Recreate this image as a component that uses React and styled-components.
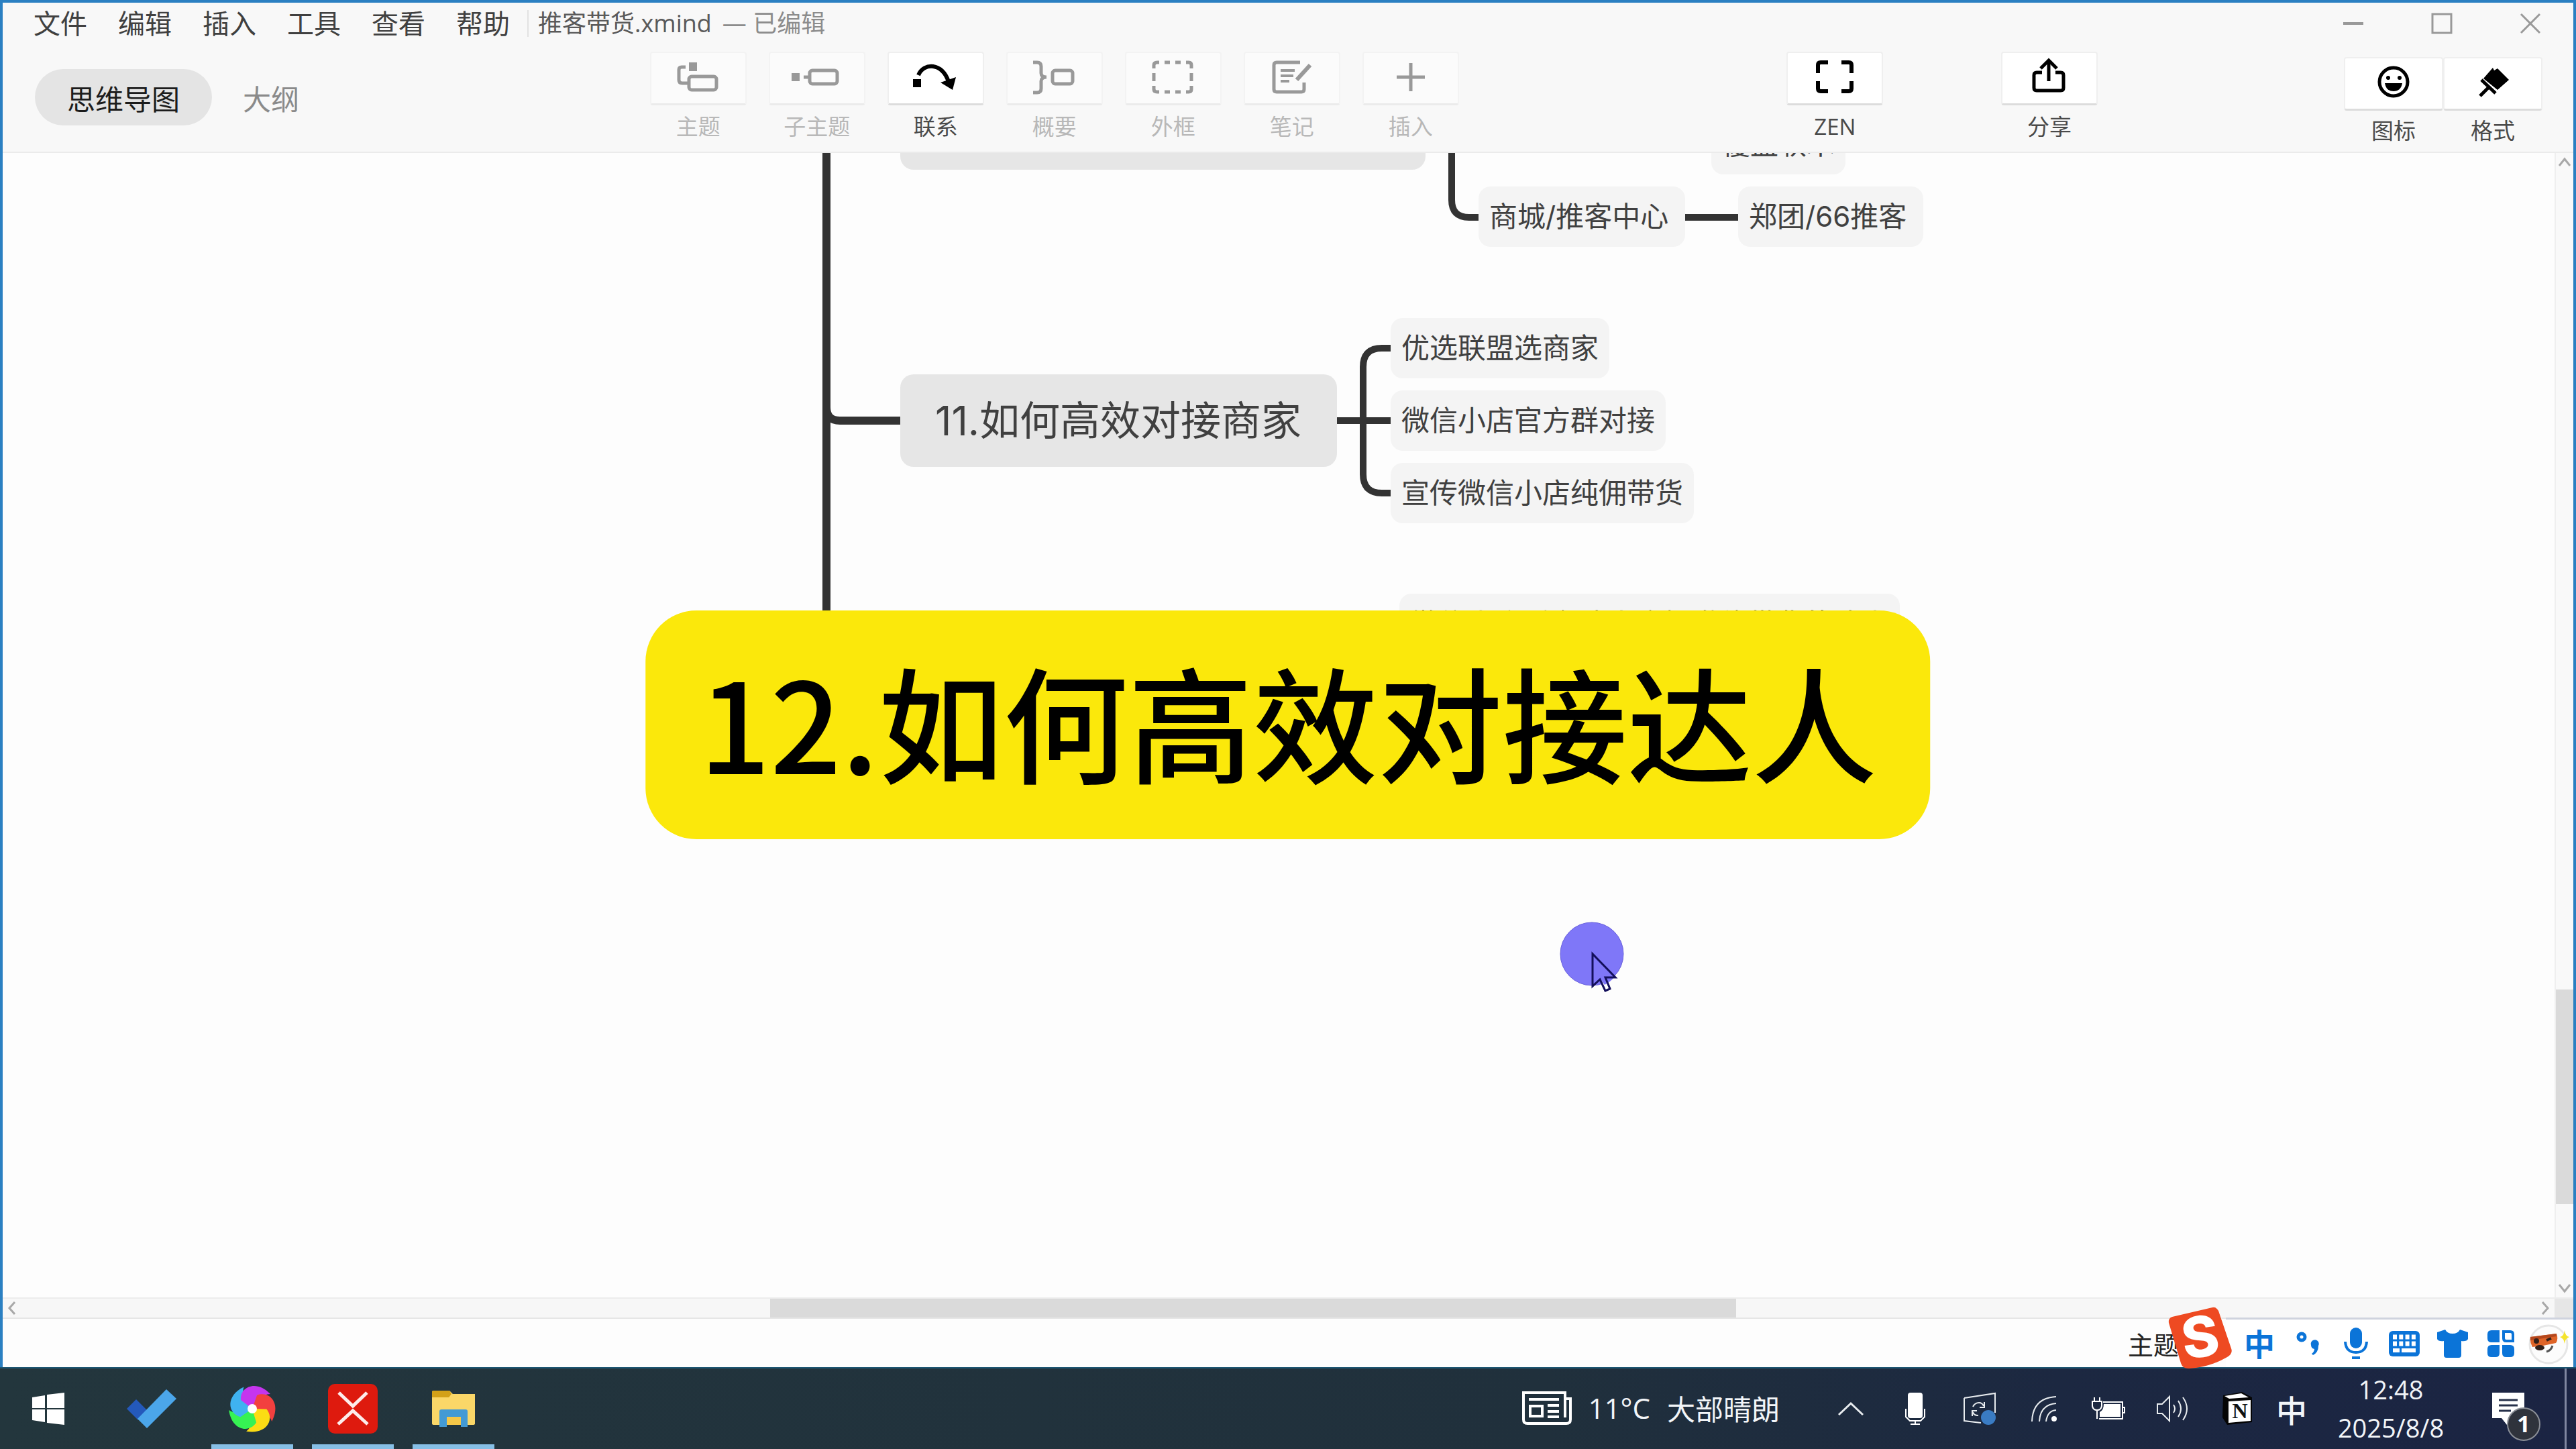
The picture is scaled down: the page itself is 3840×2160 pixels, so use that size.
import styled, { createGlobalStyle } from "styled-components";

const uiFont = `"Open Sans", "Noto Sans CJK SC", sans-serif`;
const mapFont = `"Inter", "Noto Sans CJK SC", sans-serif`;

const GlobalStyle = createGlobalStyle`
  * {
    box-sizing: border-box;
  }
  body {
    margin: 0;
    font-family: ${uiFont};
    overflow: hidden;
  }
  button {
    padding: 0;
    border: 0;
    background: none;
    color: inherit;
    font: inherit;
    cursor: pointer;
  }
  svg {
    display: block;
    flex: none;
    overflow: visible;
  }
`;

const Desktop = styled.div`
  display: flex;
  flex-direction: column;
  height: 100vh;
`;

const Window = styled.div`
  flex: 1;
  min-height: 0;
  display: flex;
  flex-direction: column;
  border: 4px solid #2b80c2;
  border-bottom: 0;
  background: #fdfdfd;
`;

/* header */

const Header = styled.header`
  background: #f8f8f8;
  border-bottom: 2px solid #ebebeb;
`;

const TitleBar = styled.div`
  display: flex;
  align-items: center;
  height: 62px;
  padding: 0 48px 0 46px;
`;

const Menu = styled.nav`
  display: flex;
  gap: 46px;
  margin-right: 26px;
`;

const MenuButton = styled.button`
  font-size: 40px;
  line-height: 56px;
  color: #404040;
`;

const FileName = styled.div`
  display: flex;
  gap: 16px;
  padding-left: 14px;
  border-left: 2px solid #e2e2e2;
  font-size: 36px;
  line-height: 40px;
  color: #5a5a5a;
`;

const FileStatus = styled.span`
  color: #8c8c8c;
`;

const WindowControls = styled.div`
  display: flex;
  gap: 100px;
  margin-left: auto;
`;

const ControlButton = styled.button`
  width: 32px;
  height: 32px;
  color: #999;
`;

const Toolbar = styled.div`
  display: flex;
  align-items: flex-start;
  height: 160px;
  padding: 11px 46px 0 48px;
`;

const Spacer = styled.div`
  flex: ${({ $grow }) => $grow} 1 0;
`;

const ViewTabs = styled.div`
  display: flex;
  gap: 46px;
  margin-top: 26px;
`;

const ViewTab = styled.button`
  height: 84px;
  padding: ${({ $active }) => ($active ? "0 48px" : "0")};
  border-radius: 42px;
  background: ${({ $active }) => ($active ? "#e4e4e4" : "none")};
  color: ${({ $active }) => ($active ? "#1c1c1c" : "#8a8a8a")};
  font-size: 42px;
`;

const ToolGroup = styled.div`
  display: flex;
  gap: ${({ $joined }) => ($joined ? "0" : "33px")};
  margin-top: ${({ $joined }) => ($joined ? "8px" : "0")};
`;

const ToolButton = styled.button`
  display: flex;
  flex-direction: column;
  align-items: center;
  gap: ${({ $wide }) => ($wide ? "10px" : "12px")};
  width: ${({ $wide }) => ($wide ? "148px" : "144px")};
  font-size: 33px;
  line-height: 40px;
  color: #4a4a4a;

  &:disabled {
    color: #b8b8b8;
    cursor: default;
  }
`;

const ToolFace = styled.span`
  display: flex;
  justify-content: center;
  width: 100%;
  height: 80px;
  border: 2px solid #efefef;
  border-bottom: 3px solid #dcdcdc;
  border-radius: 4px;
  background: #fff;
  color: #000;

  ${ToolButton}:disabled & {
    background: #fbfbfb;
    border-color: #f3f3f3;
    border-bottom-color: #ebebeb;
    color: #999;
  }
`;

/* canvas */

const Workspace = styled.div`
  position: relative;
  flex: 1;
  min-height: 0;
  display: flex;
`;

const Canvas = styled.main`
  position: relative;
  flex: 1;
  overflow: hidden;
`;

const Connectors = styled.svg`
  position: absolute;
  inset: 0;
  width: 100%;
  height: 100%;
  fill: none;
  stroke: #333;
`;

const Topic = styled.div`
  position: absolute;
  left: ${({ $x }) => $x}px;
  top: ${({ $y }) => $y}px;
  min-width: ${({ $minWidth }) => $minWidth || 0}px;
  height: ${({ $main }) => ($main ? "138px" : "90px")};
  padding: 0 ${({ $main }) => ($main ? "52px" : "16px")};
  border-radius: ${({ $main }) => ($main ? "20px" : "18px")};
  background: ${({ $main }) => ($main ? "#e6e6e6" : "#f4f4f4")};
  color: #404040;
  font-family: ${mapFont};
  font-size: ${({ $main }) => ($main ? "60px" : "42px")};
  line-height: ${({ $main }) => ($main ? "138px" : "90px")};
  white-space: nowrap;
`;

const Banner = styled.h1`
  position: absolute;
  left: 50%;
  top: 682px;
  transform: translateX(-50%);
  margin: 0;
  padding: 0 80px 14px;
  border-radius: 76px;
  background: #fbe80b;
  color: #000;
  font-family: "Noto Sans CJK SC", sans-serif;
  font-size: 186px;
  font-weight: 500;
  line-height: 327px;
  white-space: nowrap;
`;

const Pointer = styled.svg`
  position: absolute;
  left: 2321px;
  top: 1146px;
  width: 100px;
  height: 110px;
`;

const VerticalBar = styled.div`
  display: flex;
  flex-direction: column;
  width: 28px;
  background: #f9f9f9;
  border-left: 2px solid #efefef;
  color: #a8a8a8;
`;

const HorizontalBar = styled.div`
  display: flex;
  height: 32px;
  background: #f7f7f7;
  border-top: 2px solid #ececec;
  border-bottom: 2px solid #e6e6e6;
  color: #a8a8a8;
`;

const ScrollArrow = styled.button`
  display: flex;
  align-items: center;
  justify-content: center;
  flex: 0 0 28px;
`;

const Thumb = styled.div`
  flex: ${({ $grow }) => $grow} 1 0;
  background: #dadada;
`;

const Corner = styled.div`
  width: 28px;
  background: #e6e6e6;
`;

const StatusBar = styled.footer`
  position: relative;
  display: flex;
  align-items: center;
  justify-content: flex-end;
  height: 72px;
  padding-right: 588px;
  font-size: 38px;
  color: #222;
`;

const ImeBar = styled.div`
  position: absolute;
  right: 0;
  top: -2px;
  display: flex;
  align-items: center;
  height: 74px;
`;

const ImeLogo = styled.svg`
  z-index: 1;
  width: 96px;
  height: 92px;
  margin: -14px -10px 0 0;
`;

const ImeTools = styled.div`
  display: flex;
  height: 74px;
  padding-left: 14px;
  border-top: 3px solid #cfd3de;
  background: #fff;
  color: #0b74d8;
`;

const ImeButton = styled.button`
  display: flex;
  align-items: center;
  justify-content: center;
  width: 72px;
  font-size: 46px;
  font-weight: 700;
  line-height: 60px;
`;

/* taskbar */

const Taskbar = styled.footer`
  display: flex;
  justify-content: space-between;
  height: 122px;
  border-top: 2px solid #1d5672;
  background: linear-gradient(90deg, #23363d, #20303c 60%, #1c2841 80%, #1b2443);
  color: #f2f5f8;
`;

const Apps = styled.div`
  display: flex;
  gap: 28px;
  padding-left: 7px;
`;

const AppButton = styled.button`
  display: flex;
  align-items: center;
  justify-content: center;
  width: ${({ $start }) => ($start ? "130px" : "122px")};
  padding-top: ${({ $open }) => ($open ? "7px" : "0")};
  border-bottom: ${({ $open }) => ($open ? "7px solid #86bfe6" : "0")};
`;

const Tray = styled.div`
  display: flex;
  align-items: stretch;
  padding-right: 14px;
`;

const Weather = styled.button`
  display: flex;
  align-items: center;
  gap: 25px;
  margin-right: 58px;
  padding-bottom: 3px;
  font-size: 42px;
`;

const TrayButton = styled.button`
  display: flex;
  align-items: center;
  justify-content: center;
  width: ${({ $width }) => $width || 96}px;
  font-size: 46px;
  font-weight: 500;
`;

const Clock = styled.button`
  width: 230px;
  font-size: 38px;
  line-height: 57px;
  text-align: center;
`;

const ShowDesktop = styled.div`
  width: 3px;
  margin-left: 24px;
  background: #8087a0;
`;

function Face({ children }) {
  return (
    <ToolFace>
      <svg
        width="144"
        height="76"
        viewBox="0 2 144 76"
        fill="none"
        stroke="currentColor"
        strokeWidth="5"
      >
        {children}
      </svg>
    </ToolFace>
  );
}

const tools = [
  {
    label: "主题",
    icon: (
      <>
        <path d="M53 23H47Q43 23 43 27V42Q43 47 48 47H57" />
        <path d="M58 16h12v13h-12z" fill="currentColor" stroke="none" />
        <rect x="58" y="37" width="41" height="20" rx="4" />
      </>
    ),
  },
  {
    label: "子主题",
    icon: (
      <>
        <path d="M34 32h12v12h-12z" fill="currentColor" stroke="none" />
        <path d="M52 38h8" />
        <rect x="61" y="28" width="41" height="20" rx="4" />
      </>
    ),
  },
  {
    label: "联系",
    active: true,
    icon: (
      <>
        <path d="M38 41h12v12h-12z" fill="currentColor" stroke="none" />
        <path d="M46 35C54 16 82 16 91 45" strokeWidth="6" />
        <path d="M79 46L102 38L97 57z" fill="currentColor" stroke="none" />
      </>
    ),
  },
  {
    label: "概要",
    icon: (
      <>
        <path d="M40 16H46Q52 16 52 22V32Q52 38 60 38Q52 38 52 44V55Q52 61 46 61H40" />
        <rect x="69" y="28" width="30" height="20" rx="4" />
      </>
    ),
  },
  {
    label: "外框",
    icon: (
      <path d="M43 25V20Q43 16 48 16H51M59 16H67M75 16H83M91 16H95Q99 16 99 20V25M99 32V44M99 51V56Q99 60 95 60H91M83 60H75M67 60H59M51 60H48Q43 60 43 56V51M43 44V32" />
    ),
  },
  {
    label: "笔记",
    icon: (
      <>
        <path d="M84 16H49Q45 16 45 20V56Q45 60 49 60H86Q90 60 90 56V46" />
        <path d="M55 28H76M55 36H74M55 44H68" strokeWidth="4" />
        <path d="M99 20L79 42" strokeWidth="6" />
      </>
    ),
  },
  { label: "插入", icon: <path d="M51 38H93M72 17V59" /> },
];

const topics = [
  { text: "", main: true, x: 1338, y: -113, minWidth: 783 },
  { text: "覆盖软木", x: 2547, y: -58 },
  { text: "商城/推客中心", x: 2200, y: 50, minWidth: 308 },
  { text: "郑团/66推客", x: 2587, y: 50, minWidth: 276 },
  { text: "11.如何高效对接商家", main: true, x: 1338, y: 330, minWidth: 651 },
  { text: "优选联盟选商家", x: 2069, y: 246 },
  { text: "微信小店官方群对接", x: 2069, y: 354 },
  { text: "宣传微信小店纯佣带货", x: 2069, y: 462 },
  { text: "微信小店后台达人广场邀约带货的达人", x: 2082, y: 657 },
];

function MindMap() {
  return (
    <Canvas>
      <Connectors strokeWidth="10">
        <path d="M1228 0V379Q1228 399 1248 399H1338M1228 379V800" strokeWidth="12" />
        <path d="M2160 0V70Q2160 96 2186 96H2200M2508 96H2587" />
        <path d="M2069 291H2056Q2028 291 2028 319V479Q2028 507 2056 507H2069M1989 399H2069" />
      </Connectors>
      {topics.map(({ text, main, x, y, minWidth }) => (
        <Topic key={`${x}-${y}`} $main={main} $x={x} $y={y} $minWidth={minWidth}>
          {text}
        </Topic>
      ))}
      <Pointer viewBox="0 0 100 110">
        <circle cx="48" cy="48" r="47" fill="#7f77f8" stroke="#6a62dc" />
        <path d="M49 48V96L60 86L68 103L75 100L68 83H83Z" fill="#fff" stroke="#111" strokeWidth="2" />
        <path d="M49 48V95L60 85L67 94A47 47 0 0 0 82 82Z" fill="#7f77f8" />
        <path d="M49 48V96L60 86L68 103L75 100L68 83H83Z" fill="none" stroke="#14105c" strokeWidth="3" />
      </Pointer>
    </Canvas>
  );
}

function Arrow({ d, label }) {
  return (
    <ScrollArrow aria-label={label}>
      <svg width="20" height="20" viewBox="0 0 20 20" fill="none" stroke="currentColor" strokeWidth="3">
        <path d={d} />
      </svg>
    </ScrollArrow>
  );
}

function Ime() {
  return (
    <ImeBar>
      <ImeLogo viewBox="0 0 96 92">
        <path d="M6 15L66 1Q72 0 75 6L94 62Q97 70 88 75Q62 90 32 92Q22 93 19 84L1 24Q0 17 6 15Z" fill="#ee4a22" />
        <text
          x="48"
          y="75"
          transform="rotate(-8 48 46)"
          textAnchor="middle"
          fontFamily="Inter, sans-serif"
          fontSize="84"
          fontWeight="800"
          fill="#fff"
        >
          S
        </text>
      </ImeLogo>
      <ImeTools>
        <ImeButton>中</ImeButton>
        <ImeButton aria-label="标点">
          <svg width="36" height="36" viewBox="0 0 36 36">
            <circle cx="9" cy="8" r="5" fill="none" stroke="currentColor" strokeWidth="5" />
            <path d="M23 20a6 6 0 1 1 11 1Q34 31 26 35L24 33Q28 30 28 26Q23 25 23 20Z" fill="currentColor" />
          </svg>
        </ImeButton>
        <ImeButton aria-label="语音">
          <svg width="36" height="48" viewBox="0 0 36 48" fill="none" stroke="currentColor" strokeWidth="4">
            <rect x="9" y="0" width="18" height="31" rx="9" fill="currentColor" stroke="none" />
            <path d="M2 21Q3 37 18 37Q33 37 34 21M12 45H24" />
          </svg>
        </ImeButton>
        <ImeButton aria-label="键盘">
          <svg width="46" height="38" viewBox="0 0 46 38">
            <rect width="46" height="38" rx="6" fill="currentColor" />
            <path
              d="M6 9H40M6 19H40"
              stroke="#fff"
              strokeWidth="7"
              strokeDasharray="6 3.3"
            />
            <path d="M6 29H16M19 29H40" stroke="#fff" strokeWidth="6" />
          </svg>
        </ImeButton>
        <ImeButton aria-label="皮肤">
          <svg width="46" height="42" viewBox="0 0 46 42" fill="currentColor">
            <path d="M0 4L12 0Q15 6 23 6Q31 6 34 0L46 4V14Q44 18 36 17V38Q36 42 32 42H14Q10 42 10 38V17Q2 18 0 14Z" />
          </svg>
        </ImeButton>
        <ImeButton aria-label="工具箱">
          <svg width="40" height="40" viewBox="0 0 40 40" fill="currentColor">
            <path d="M6 0H18V18H6Q0 18 0 12V6Q0 0 6 0ZM6 22H18V34Q18 40 12 40H6Q0 40 0 34V28Q0 22 6 22ZM22 22H34Q40 22 40 28V34Q40 40 34 40H28Q22 40 22 34Z" />
            <path d="M24 2H34Q38 2 38 6V16H28Q24 16 24 12Z" fill="none" stroke="currentColor" strokeWidth="4" />
          </svg>
        </ImeButton>
        <ImeButton aria-label="助手">
          <svg width="62" height="60" viewBox="0 0 62 60">
            <ellipse cx="30" cy="31" rx="28" ry="28" fill="#fcfcfc" stroke="#e6e6e6" strokeWidth="3" />
            <path d="M3 20L42 15Q45 24 41 29L22 33L6 35Q2 28 3 20Z" fill="#df6428" />
            <path d="M3 20L42 15L42 19L3 25Z" fill="#b5471c" />
            <circle cx="12" cy="26" r="4" fill="#33201a" />
            <path d="M27 25l7-3" stroke="#33201a" strokeWidth="4" />
            <ellipse cx="17" cy="36" rx="7" ry="4" fill="#33201a" />
            <path d="M27 42Q34 40 36 33" fill="none" stroke="#555" strokeWidth="3" />
            <path d="M54 10Q55 19 61 20Q55 22 54 30Q53 22 47 20Q53 19 54 10Z" fill="#f4e32c" />
          </svg>
        </ImeButton>
      </ImeTools>
    </ImeBar>
  );
}

function TrayIcons() {
  return (
    <>
      <TrayButton aria-label="显示隐藏的图标">
        <svg width="38" height="20" viewBox="0 0 38 20" fill="none" stroke="#e8ecef" strokeWidth="3">
          <path d="M1 19L19 2L37 19" />
        </svg>
      </TrayButton>
      <TrayButton aria-label="麦克风">
        <svg width="30" height="48" viewBox="0 0 30 48" fill="none" stroke="#fff" strokeWidth="2">
          <rect x="4" y="0" width="22" height="38" rx="4" fill="#fff" stroke="none" />
          <path d="M1 24V36L7 42H23L29 36V24M15 42V47M8 47H22" />
        </svg>
      </TrayButton>
      <TrayButton aria-label="更新">
        <svg width="48" height="48" viewBox="0 0 48 48" fill="none" stroke="#e8ecef" strokeWidth="2">
          <path d="M1 8L47 1V30M26 45L1 42V8" />
          <path d="M14 21Q17 15 23 15Q28 15 30 20M31 14V22H24M22 34Q15 34 14 29M13 35V27H20" strokeWidth="2" />
          <circle cx="37" cy="37" r="11" fill="#3a7cc4" stroke="none" />
        </svg>
      </TrayButton>
      <TrayButton aria-label="网络">
        <svg width="38" height="38" viewBox="0 0 38 38" fill="none" stroke="#e8ecef" strokeWidth="2">
          <path d="M1 38Q2 3 37 1M12 38Q13 13 37 11M22 38Q24 22 37 21" />
          <circle cx="34" cy="34" r="4" fill="#fff" stroke="none" />
        </svg>
      </TrayButton>
      <TrayButton aria-label="电源">
        <svg width="50" height="34" viewBox="0 0 50 34" fill="none" stroke="#fff" strokeWidth="2">
          <path d="M17 7H46V32H11M46 15H49V23H46" />
          <path d="M18 10H43V29H12V22Q18 19 18 10Z" fill="#fff" stroke="none" />
          <path d="M4 0V6M12 0V6M1 6H15V13Q14 19 8 19Q2 19 1 13ZM8 19V32" />
        </svg>
      </TrayButton>
      <TrayButton aria-label="音量">
        <svg width="48" height="38" viewBox="0 0 48 38" fill="none" stroke="#e8ecef" strokeWidth="2">
          <path d="M1 12H8L19 1V37L8 26H1ZM25 13Q29 19 25 25M32 7Q40 19 32 31M39 2Q51 19 39 36" />
        </svg>
      </TrayButton>
      <TrayButton aria-label="Notion">
        <svg width="46" height="50" viewBox="0 0 46 50">
          <path d="M2 5L30 0L45 8V45L8 49L1 38Z" fill="#050505" />
          <path d="M4 6L29 2L40 8L11 10Z" fill="#fff" />
          <path d="M10 14L43 12V43L10 46Z" fill="#fff" />
          <text x="27" y="39" textAnchor="middle" fontFamily="Liberation Serif, serif" fontSize="32" fontWeight="700" fill="#111">
            N
          </text>
        </svg>
      </TrayButton>
      <TrayButton $width={66}>中</TrayButton>
    </>
  );
}

// one blade of the browser logo, repeated every 72 degrees
const blade = "M-17 -13C-18 -33 6 -44 27 -22C15 -22 5 -10 0 0Z";

function PinnedApps() {
  return (
    <Apps>
      <AppButton $start aria-label="开始">
        <svg width="48" height="48" viewBox="0 0 48 48" fill="#fff">
          <path d="M0 7L19 4V23H0ZM22 3L48 0V23H22ZM0 25H19V44L0 41ZM22 25H48V48L22 45Z" />
        </svg>
      </AppButton>
      <AppButton aria-label="待办">
        <svg width="74" height="58" viewBox="0 0 74 58">
          <path d="M0 29L14 15L31 32L17 46Z" fill="#2459bb" />
          <path d="M16 44L59 0L74 14L30 58Z" fill="#4ba6ea" />
        </svg>
      </AppButton>
      <AppButton $open aria-label="浏览器">
        <svg width="72" height="72" viewBox="-36 -36 72 72">
          <path d={blade} fill="#c535ee" />
          <path d={blade} fill="#f2403f" transform="rotate(72)" />
          <path d={blade} fill="#fbdc14" transform="rotate(144)" />
          <path d={blade} fill="#36f253" transform="rotate(216)" />
          <path d={blade} fill="#3fb2f0" transform="rotate(288)" />
          <path d="M-17 -13C-18 -27 -8 -33 2 -33C-6 -20 -4 -8 0 0Z" fill="#c535ee" />
          <circle r="7" fill="#fff" />
        </svg>
      </AppButton>
      <AppButton $open aria-label="XMind">
        <svg width="74" height="74" viewBox="0 0 74 74" fill="none" stroke="#fdeceb" strokeWidth="5">
          <rect width="74" height="74" rx="10" fill="#de1a0e" stroke="none" />
          <path d="M16 13L37 33L58 13M15 60L37 40L59 60" />
        </svg>
      </AppButton>
      <AppButton $open aria-label="文件资源管理器">
        <svg width="64" height="56" viewBox="0 0 64 56">
          <path d="M0 3Q0 1 3 1H26L31 6H64V50Q64 52 61 52H3Q0 52 0 50Z" fill="#fad768" />
          <path d="M0 3Q0 1 3 1H26L29 6L25 11H0Z" fill="#d3a118" />
          <path d="M22 40H43V52H22Z" fill="#f5c748" />
          <path d="M11 55V32Q11 29 14 29H50Q53 29 53 32V55H43V40H22V55Z" fill="#439ad4" />
        </svg>
      </AppButton>
    </Apps>
  );
}

export default function App() {
  return (
    <Desktop>
      <GlobalStyle />
      <Window>
        <Header>
          <TitleBar>
            <Menu>
              {["文件", "编辑", "插入", "工具", "查看", "帮助"].map((item) => (
                <MenuButton key={item}>{item}</MenuButton>
              ))}
            </Menu>
            <FileName>
              <span>推客带货.xmind</span>
              <FileStatus>— 已编辑</FileStatus>
            </FileName>
            <WindowControls>
              <ControlButton aria-label="最小化">
                <svg width="32" height="32" stroke="currentColor" strokeWidth="4">
                  <path d="M1 16H31" />
                </svg>
              </ControlButton>
              <ControlButton aria-label="最大化">
                <svg width="32" height="32" fill="none" stroke="currentColor" strokeWidth="3">
                  <path d="M2 2H30V30H2Z" />
                </svg>
              </ControlButton>
              <ControlButton aria-label="关闭">
                <svg width="32" height="32" stroke="currentColor" strokeWidth="3">
                  <path d="M2 2L30 30M30 2L2 30" />
                </svg>
              </ControlButton>
            </WindowControls>
          </TitleBar>
          <Toolbar>
            <ViewTabs>
              <ViewTab $active>思维导图</ViewTab>
              <ViewTab>大纲</ViewTab>
            </ViewTabs>
            <Spacer $grow={524} />
            <ToolGroup>
              {tools.map(({ label, active, icon }) => (
                <ToolButton key={label} disabled={!active}>
                  <Face>{icon}</Face>
                  {label}
                </ToolButton>
              ))}
            </ToolGroup>
            <Spacer $grow={490} />
            <ToolButton>
              <Face>
                <path
                  strokeWidth="6"
                  d="M47 32V20Q47 16 51 16H62M82 16H93Q97 16 97 20V32M97 44V55Q97 59 93 59H82M62 59H51Q47 59 47 55V44"
                />
              </Face>
              ZEN
            </ToolButton>
            <Spacer $grow={176} />
            <ToolButton>
              <Face>
                <path d="M61 31H53Q49 31 49 35V54Q49 58 53 58H89Q93 58 93 54V35Q93 31 89 31H81M71 44V15" />
                <path d="M59 25L71 13L83 25" />
              </Face>
              分享
            </ToolButton>
            <Spacer $grow={368} />
            <ToolGroup $joined>
              <ToolButton $wide>
                <Face>
                  <circle cx="72" cy="37" r="21" />
                  <g fill="currentColor" stroke="none">
                    <circle cx="64" cy="31" r="3" />
                    <circle cx="81" cy="31" r="3" />
                    <path d="M59 39H85Q83 51 72 51Q61 51 59 39Z" />
                  </g>
                </Face>
                图标
              </ToolButton>
              <ToolButton $wide>
                <Face>
                  <path d="M58 32L72 16L74 20L79 17L96 34L79 49Z" fill="currentColor" stroke="none" />
                  <path d="M55 34L76 54M67 44L53 58" />
                </Face>
                格式
              </ToolButton>
            </ToolGroup>
          </Toolbar>
        </Header>
        <Workspace>
          <MindMap />
          <VerticalBar>
            <Arrow d="M2 15L10 5L18 15" label="向上滚动" />
            <Spacer $grow={1219} />
            <Thumb $grow={320} />
            <Spacer $grow={111} />
            <Arrow d="M2 5L10 15L18 5" label="向下滚动" />
          </VerticalBar>
          <Banner>12.如何高效对接达人</Banner>
        </Workspace>
        <HorizontalBar>
          <Arrow d="M14 1L6 10L14 19" label="向左滚动" />
          <Spacer $grow={1116} />
          <Thumb $grow={1440} />
          <Spacer $grow={1192} />
          <Arrow d="M6 1L14 10L6 19" label="向右滚动" />
          <Corner />
        </HorizontalBar>
        <StatusBar>
          主题
          <Ime />
        </StatusBar>
      </Window>
      <Taskbar>
        <PinnedApps />
        <Tray>
          <Weather>
            <svg width="74" height="50" viewBox="0 0 74 50" fill="none" stroke="#fff" strokeWidth="4">
              <path d="M64 39V2H2V42Q2 48 8 48H66Q72 48 72 42V11H64" />
              <path d="M10 12H55M38 21H55M38 30H55M38 38H55" />
              <path d="M12 22H30V37H12Z" />
            </svg>
            <span>11°C</span>
            <span>大部晴朗</span>
          </Weather>
          <TrayIcons />
          <Clock>
            12:48
            <br />
            2025/8/8
          </Clock>
          <TrayButton $width={120} aria-label="通知">
            <svg width="48" height="48" viewBox="0 0 48 48">
              <path d="M0 0H48V38H32L22 48L14 38H0Z" fill="#fff" />
              <path d="M10 11H38M10 19H38M10 27H28" stroke="#26304a" strokeWidth="3" />
              <circle cx="47" cy="47" r="24" fill="#2f333c" stroke="#8b8f97" strokeWidth="2" />
              <text x="47" y="59" textAnchor="middle" fontFamily="Open Sans, sans-serif" fontSize="34" fontWeight="700" fill="#fff">
                1
              </text>
            </svg>
          </TrayButton>
          <ShowDesktop />
        </Tray>
      </Taskbar>
    </Desktop>
  );
}
